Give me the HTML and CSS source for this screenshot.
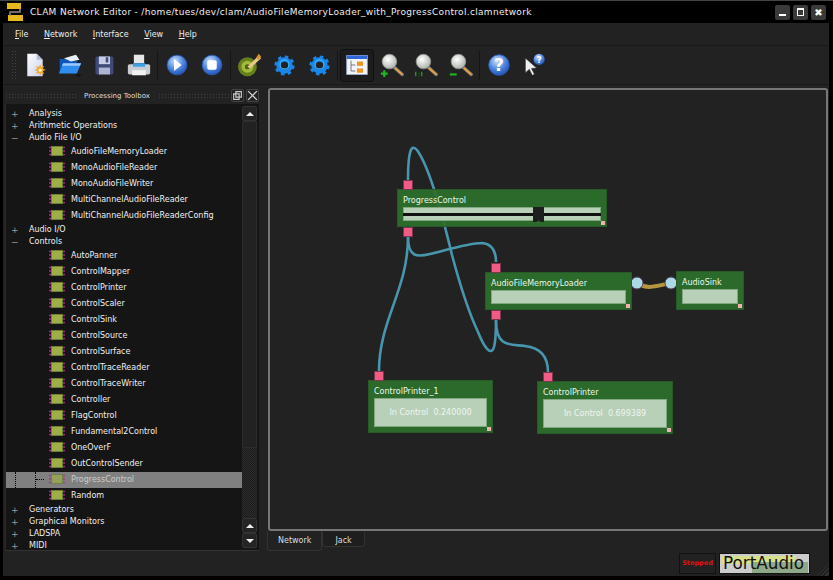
FILE: index.html
```html
<!DOCTYPE html>
<html lang="en">
<head>
    <meta charset="UTF-8">
    <title>CLAM Network Editor</title>
    <link rel="stylesheet" href="styles.css">
</head>
<body>
    <svg class="defs" width="0" height="0">
        <defs>
            <radialGradient id="blueBall" cx="40%" cy="30%" r="75%">
                <stop offset="0" stop-color="#cfe0fb"/>
                <stop offset="0.55" stop-color="#4f86de"/>
                <stop offset="1" stop-color="#1c4fb0"/>
            </radialGradient>
            <radialGradient id="lens" cx="40%" cy="35%" r="70%">
                <stop offset="0" stop-color="#ffffff"/>
                <stop offset="1" stop-color="#a9aea6"/>
            </radialGradient>
            <linearGradient id="paper" x1="0" y1="0" x2="1" y2="1">
                <stop offset="0" stop-color="#ffffff"/>
                <stop offset="1" stop-color="#c9cfe8"/>
            </linearGradient>
            <symbol id="chip" viewBox="0 0 16 10">
                <path d="M0 1.500h3M0 5h3M0 8.500h3M13 1.500h3M13 5h3M13 8.500h3" stroke="#b0209a" stroke-width="1.500"/>
                <rect x="2.500" y="0.500" width="11" height="9" fill="#9db048" stroke="#6d7f30"/>
            </symbol>
            <symbol id="gear" viewBox="0 0 28 28">
                <circle cx="14" cy="14" r="8" fill="none" stroke="#1a86e8" stroke-width="6"/>
                <circle cx="14" cy="14" r="11.500" fill="none" stroke="#1a86e8" stroke-width="4" stroke-dasharray="4.500 4.530"/>
                <circle cx="14" cy="12.500" r="6" fill="none" stroke="#3fb6fa" stroke-width="1.500"/>
            </symbol>
            <symbol id="magnifier" viewBox="0 0 28 28">
                <path d="M16 16l10 9" stroke="#777" stroke-width="4" stroke-linecap="round"/>
                <path d="M18 18l7.500 6.700" stroke="#e8a13c" stroke-width="2.200" stroke-linecap="round"/>
                <circle cx="11" cy="10" r="8.500" fill="url(#lens)" stroke="#8e938c"/>
            </symbol>
        </defs>
    </svg>

    <div class="window">
        <header class="titlebar">
            <svg class="app-logo" viewBox="0 0 20 20">
                <rect x="2" y="1" width="14" height="6" fill="#e6b81e"/>
                <rect x="3" y="13" width="15" height="6" fill="#e6b81e"/>
                <path d="M15 7v3H5v4" fill="none" stroke="#8a8a8a" stroke-width="1.500"/>
            </svg>
            <span class="window-title">CLAM Network Editor - /home/tues/dev/clam/AudioFileMemoryLoader_with_ProgressControl.clamnetwork</span>
            <div class="window-buttons">
                <span class="wm-btn"><i class="wm-min"></i></span>
                <span class="wm-btn"><i class="wm-max"></i></span>
                <span class="wm-btn wm-close">✖</span>
            </div>
        </header>

        <div class="client">
            <nav class="menubar">
                <span class="menu"><u>F</u>ile</span>
                <span class="menu"><u>N</u>etwork</span>
                <span class="menu"><u>I</u>nterface</span>
                <span class="menu"><u>V</u>iew</span>
                <span class="menu"><u>H</u>elp</span>
            </nav>

            <div class="toolbar">
                <span class="grip"></span>
                <span class="tool"><svg viewBox="0 0 28 28"><path d="M5 1h11l7 7v19H5z" fill="url(#paper)"/><path d="M16 1v7h7z" fill="#b5bbd6"/><path d="M20 13l1.200 3.500 3.500-1.500-1.500 3.500 3.500 1.200-3.500 1.300 1.500 3.500-3.500-1.500-1.200 3.500-1.300-3.500-3.500 1.500 1.500-3.500-3.500-1.300 3.500-1.200-1.500-3.500 3.500 1.500z" fill="#f5a623"/><circle cx="20" cy="20" r="2" fill="#fff3b0"/></svg></span>
                <span class="tool"><svg viewBox="0 0 28 28"><path d="M2 7h8l2 2h10v14H2z" fill="#0e56b8"/><path d="M7 6l14-4 4 6-10 2z" fill="#e8eefb"/><path d="M6 12h21l-5 12H1z" fill="#2f8df0"/><path d="M6 12h21l-1.500 3H4.500z" fill="#9cc9fb"/><path d="M20 25h8l-4 3z" fill="#111"/></svg></span>
                <span class="tool"><svg viewBox="0 0 28 28"><rect x="4" y="4" width="21" height="21" rx="2" fill="#3f4a78"/><rect x="8" y="4" width="13" height="9" fill="#c7cde6"/><rect x="8" y="17" width="13" height="8" fill="#aeb5d0"/><rect x="16" y="5" width="3" height="6" fill="#3f4a78"/></svg></span>
                <span class="tool"><svg viewBox="0 0 28 28"><rect x="8" y="2" width="12" height="10" fill="#e6e6e6"/><path d="M3 13h22a2 2 0 0 1 2 2v8a2 2 0 0 1-2 2H3a2 2 0 0 1-2-2v-8a2 2 0 0 1 2-2z" fill="#c9ccd0"/><rect x="7" y="12" width="14" height="4" fill="#3aa0e8"/><rect x="6" y="20" width="16" height="6" fill="#f2f2f2"/></svg></span>
                <span class="tool-sep"></span>
                <span class="tool"><svg viewBox="0 0 28 28"><circle cx="14" cy="14" r="11.500" fill="url(#blueBall)" stroke="#2a5ec0"/><path d="M10.500 7l9 7-9 7z" fill="#fff"/></svg></span>
                <span class="tool"><svg viewBox="0 0 28 28"><circle cx="14" cy="14" r="11.500" fill="url(#blueBall)" stroke="#2a5ec0"/><rect x="8.500" y="8.500" width="11" height="11" rx="2" fill="#fff"/></svg></span>
                <span class="tool-sep"></span>
                <span class="tool"><svg viewBox="0 0 28 28"><circle cx="11" cy="16" r="11" fill="#66801e"/><circle cx="11" cy="16" r="7" fill="#a3ba3c"/><circle cx="11" cy="16" r="3" fill="#4c6214"/><path d="M11 16L24 3l3 3-13 12z" fill="#e8c98c"/><path d="M21 6l3-5 3 3-3 4z" fill="#d9942a"/></svg></span>
                <span class="tool"><svg class="gear-icon" viewBox="0 0 28 28"><use href="#gear"/></svg></span>
                <span class="tool"><svg class="gear-icon" viewBox="0 0 28 28"><use href="#gear"/></svg></span>
                <span class="tool-sep"></span>
                <span class="tool is-on"><svg viewBox="0 0 28 28"><rect x="2" y="3" width="24" height="22" fill="#f2f4fa" stroke="#9fb2d8"/><rect x="2" y="3" width="24" height="4" fill="#2f67d8"/><path d="M7 9v12M7 14h5M7 21h5" stroke="#666" fill="none"/><rect x="14" y="10" width="7" height="5" fill="#f0921e"/><rect x="14" y="18" width="7" height="5" fill="#f0921e"/></svg></span>
                <span class="tool"><svg viewBox="0 0 28 28"><use href="#magnifier"/><path d="M1 24h8M5 20v8" stroke="#22b522" stroke-width="2.500"/></svg></span>
                <span class="tool"><svg viewBox="0 0 28 28"><use href="#magnifier"/><path d="M2 22v5M6 24v.500M6 26.500v.500M9 22v5" stroke="#1d9c1d" stroke-width="1.600"/></svg></span>
                <span class="tool"><svg viewBox="0 0 28 28"><use href="#magnifier"/><path d="M1 25h8" stroke="#22b522" stroke-width="2.500"/></svg></span>
                <span class="tool-sep"></span>
                <span class="tool"><svg viewBox="0 0 28 28"><circle cx="14" cy="14" r="12" fill="url(#blueBall)" stroke="#2a5ec0"/><text x="14" y="21" class="help-mark">?</text></svg></span>
                <span class="tool"><svg viewBox="0 0 28 28"><path d="M4 6v17l4.500-4 3.500 7 2.500-1.200-3.500-6.800 6-.500z" fill="#eee" stroke="#333" stroke-width="0.600"/><circle cx="20" cy="7.500" r="6.500" fill="url(#blueBall)"/><text x="20" y="11.500" class="help-mark small">?</text></svg></span>
            </div>

            <div class="main">
                <aside class="dock">
                    <div class="dock-title">
                        <span class="dock-dots"></span>
                        <span class="dock-label">Processing Toolbox</span>
                        <span class="dock-dots"></span>
                        <span class="dock-btn"><svg viewBox="0 0 10 10"><path d="M3.500 1.500h5v5h-5zM1.500 3.500h5v5h-5z" fill="none" stroke="#ccc"/></svg></span>
                        <span class="dock-btn"><svg viewBox="0 0 10 10"><path d="M1 1l8 8M9 1l-8 8" stroke="#ccc" stroke-width="1.200"/></svg></span>
                    </div>
                    <div class="tree-box">
                        <div class="tree">
                            <div class="group"><b>+</b>Analysis</div>
                            <div class="group"><b>+</b>Arithmetic Operations</div>
                            <div class="group"><b>−</b>Audio File I/O</div>
                            <div class="leaf"><svg class="chip"><use href="#chip"/></svg>AudioFileMemoryLoader</div>
                            <div class="leaf"><svg class="chip"><use href="#chip"/></svg>MonoAudioFileReader</div>
                            <div class="leaf"><svg class="chip"><use href="#chip"/></svg>MonoAudioFileWriter</div>
                            <div class="leaf"><svg class="chip"><use href="#chip"/></svg>MultiChannelAudioFileReader</div>
                            <div class="leaf"><svg class="chip"><use href="#chip"/></svg>MultiChannelAudioFileReaderConfig</div>
                            <div class="group"><b>+</b>Audio I/O</div>
                            <div class="group"><b>−</b>Controls</div>
                            <div class="leaf"><svg class="chip"><use href="#chip"/></svg>AutoPanner</div>
                            <div class="leaf"><svg class="chip"><use href="#chip"/></svg>ControlMapper</div>
                            <div class="leaf"><svg class="chip"><use href="#chip"/></svg>ControlPrinter</div>
                            <div class="leaf"><svg class="chip"><use href="#chip"/></svg>ControlScaler</div>
                            <div class="leaf"><svg class="chip"><use href="#chip"/></svg>ControlSink</div>
                            <div class="leaf"><svg class="chip"><use href="#chip"/></svg>ControlSource</div>
                            <div class="leaf"><svg class="chip"><use href="#chip"/></svg>ControlSurface</div>
                            <div class="leaf"><svg class="chip"><use href="#chip"/></svg>ControlTraceReader</div>
                            <div class="leaf"><svg class="chip"><use href="#chip"/></svg>ControlTraceWriter</div>
                            <div class="leaf"><svg class="chip"><use href="#chip"/></svg>Controller</div>
                            <div class="leaf"><svg class="chip"><use href="#chip"/></svg>FlagControl</div>
                            <div class="leaf"><svg class="chip"><use href="#chip"/></svg>Fundamental2Control</div>
                            <div class="leaf"><svg class="chip"><use href="#chip"/></svg>OneOverF</div>
                            <div class="leaf"><svg class="chip"><use href="#chip"/></svg>OutControlSender</div>
                            <div class="leaf selected"><i class="guide-a"></i><i class="guide-b"></i><svg class="chip"><use href="#chip"/></svg>ProgressControl</div>
                            <div class="leaf"><svg class="chip"><use href="#chip"/></svg>Random</div>
                            <div class="group"><b>+</b>Generators</div>
                            <div class="group"><b>+</b>Graphical Monitors</div>
                            <div class="group"><b>+</b>LADSPA</div>
                            <div class="group"><b>+</b>MIDI</div>
                        </div>
                        <div class="scrollbar">
                            <span class="sb-btn sb-up"></span>
                            <span class="sb-handle"></span>
                            <span class="sb-trough"></span>
                            <span class="sb-btn sb-up"></span>
                            <span class="sb-btn sb-down"></span>
                        </div>
                    </div>
                </aside>

                <section class="work">
                    <div class="canvas">
                        <svg class="wires" viewBox="0 0 559 443">
                            <g transform="translate(-270 -90)">
                                <path class="wire" d="M408 180C408 152 411 143 417 150C428 165 440 205 452 255C460 285 470 315 478 332C484 347 491 357 494 347C496 340 496 330 496 320"/>
                                <path class="wire" d="M408 237C408 258 418 257 430 254C450 249 470 243 482 243C492 244 496 252 496 262"/>
                                <path class="wire" d="M408 237C408 290 379 320 379 371"/>
                                <path class="wire" d="M496 320C496 348 510 344 525 346C542 348 548 358 548 372"/>
                                <path class="wire-audio" d="M637 283C648 290 656 286 671 283"/>
                                <circle class="audio-port" cx="637" cy="283" r="6"/>
                                <circle class="audio-port" cx="671" cy="283" r="6"/>
                            </g>
                        </svg>

                        <div class="node node-progress">
                            <span class="port port-top"></span>
                            <span class="node-name">ProgressControl</span>
                            <div class="node-body slider"><span class="slider-groove"></span><span class="slider-thumb"></span></div>
                            <span class="port port-bottom"></span>
                            <span class="resize"></span>
                        </div>
                        <div class="node node-loader">
                            <span class="port port-top"></span>
                            <span class="node-name">AudioFileMemoryLoader</span>
                            <div class="node-body"></div>
                            <span class="port port-bottom"></span>
                            <span class="resize"></span>
                        </div>
                        <div class="node node-sink">
                            <span class="node-name">AudioSink</span>
                            <div class="node-body"></div>
                            <span class="resize"></span>
                        </div>
                        <div class="node node-printer1">
                            <span class="port port-top"></span>
                            <span class="node-name">ControlPrinter_1</span>
                            <div class="node-body printer">In Control&nbsp; 0.240000</div>
                            <span class="resize"></span>
                        </div>
                        <div class="node node-printer2">
                            <span class="port port-top"></span>
                            <span class="node-name">ControlPrinter</span>
                            <div class="node-body printer">In Control&nbsp; 0.699389</div>
                            <span class="resize"></span>
                        </div>
                    </div>
                    <div class="tabs">
                        <span class="tab active">Network</span>
                        <span class="tab">Jack</span>
                    </div>
                </section>
            </div>

            <footer class="statusbar">
                <span class="stopped">Stopped</span>
                <span class="backend">
                    <i class="level-top"></i><i class="level-bottom"></i>
                    <span class="backend-name">PortAudio</span>
                </span>
                <span class="size-grip"></span>
            </footer>
        </div>
    </div>
</body>
</html>
```

FILE: styles.css
```css
html, body {
    margin: 0;
    padding: 0;
    background: #000;
}

body {
    font-family: "DejaVu Sans", sans-serif;
    font-size: 8px;
    color: #f0f0f0;
}

.defs {
    display: block;
}

.window {
    width: 833px;
    height: 580px;
    box-sizing: border-box;
    background: #000;
    border-top: 1px solid #444;
    display: flex;
    flex-direction: column;
    overflow: hidden;
}

/* Title bar */
.titlebar {
    height: 22px;
    display: flex;
    align-items: center;
    padding: 0 7px 0 5px;
    flex: none;
}

.app-logo {
    width: 20px;
    height: 20px;
    margin-right: 5px;
}

.window-title {
    font-size: 9px;
    letter-spacing: 0.32px;
    color: #eee;
    flex: 1;
    white-space: nowrap;
}

.window-buttons {
    display: flex;
    gap: 3px;
}

.wm-btn {
    width: 15px;
    height: 15px;
    border-radius: 2px;
    background: #3a3a3a;
    color: #fff;
    display: flex;
    align-items: center;
    justify-content: center;
    font-size: 10px;
}

.wm-min {
    width: 7px;
    height: 2px;
    background: #fff;
    margin-top: 6px;
}

.wm-max {
    width: 5px;
    height: 5px;
    border: 1px solid #fff;
    border-top-width: 2px;
}

/* Main client area */
.client {
    flex: 1;
    margin: 0 4px 4px 3px;
    background: #222;
    display: flex;
    flex-direction: column;
    min-height: 0;
}

.menubar {
    height: 23px;
    flex: none;
    display: flex;
    align-items: center;
    padding-left: 12px;
    gap: 15.500px;
    border-bottom: 1px solid #191919;
    box-sizing: border-box;
}

.menu {
    color: #eee;
}

.toolbar {
    height: 39px;
    flex: none;
    display: flex;
    align-items: center;
    padding-left: 8px;
    border-bottom: 1px solid #191919;
    box-sizing: border-box;
}

.grip {
    width: 6px;
    height: 30px;
    margin-right: 1px;
    background-image: radial-gradient(#444 1px, transparent 1px);
    background-size: 3px 3px;
}

.tool {
    width: 34.600px;
    height: 33px;
    display: flex;
    align-items: center;
    justify-content: center;
    flex: none;
    box-sizing: border-box;
}

.tool svg {
    width: 24px;
    height: 24px;
}

.tool .gear-icon {
    width: 21px;
    height: 21px;
}

.tool.is-on {
    background: #1c1c1c;
    border: 1px solid #111;
    border-radius: 3px;
}

.tool-sep {
    width: 1px;
    height: 30px;
    margin: 0 1.500px 0 1px;
    background: #161616;
    flex: none;
}

.help-mark {
    font-family: "DejaVu Sans", sans-serif;
    font-size: 20px;
    font-weight: bold;
    fill: #fff;
    text-anchor: middle;
}

.help-mark.small {
    font-size: 10px;
}

.main {
    flex: 1;
    display: flex;
    min-height: 0;
}

/* Processing toolbox */
.dock {
    width: 254px;
    margin-left: 2px;
    margin-right: 9px;
    flex: none;
    display: flex;
    flex-direction: column;
    padding-top: 3px;
}

.dock-title {
    height: 15px;
    flex: none;
    display: flex;
    align-items: center;
    gap: 2px;
    font-size: 7px;
    color: #ddd;
}

.dock-dots {
    flex: 1;
    height: 5px;
    background-image: radial-gradient(#444 1px, transparent 1px);
    background-size: 3px 3px;
}

.dock-label {
    padding: 0 6px;
    white-space: nowrap;
}

.dock-btn {
    width: 13px;
    height: 13px;
    box-sizing: border-box;
    border: 1px solid #444;
    border-radius: 2px;
    display: flex;
    flex: none;
}

.tree-box {
    flex: 1;
    min-height: 0;
    margin-top: 1px;
    display: flex;
    background: #151515;
    border-bottom: 1px solid #333;
    border-left: 1px solid #2a2a2a;
}

.tree {
    flex: 1;
    padding-top: 3px;
    overflow: hidden;
    min-width: 0;
}

.group {
    height: 12px;
    line-height: 14px;
    display: flex;
    white-space: nowrap;
    padding-left: 5px;
}

.group b {
    width: 18px;
    font-weight: normal;
    font-size: 9px;
    color: #999;
    flex: none;
}

.leaf {
    height: 16px;
    display: flex;
    align-items: center;
    padding-left: 43px;
    white-space: nowrap;
    position: relative;
}

.chip {
    width: 16px;
    height: 10px;
    margin-right: 6px;
    flex: none;
}

.leaf.selected {
    background: linear-gradient(transparent 1px, #808080 1px);
    box-shadow: 0 1px 0 #808080;
    color: #ccc;
}

.leaf.selected .chip {
    opacity: 0.7;
}

.guide-a, .guide-b {
    position: absolute;
    top: 1px;
    height: 16px;
    border-left: 1px dotted #000;
}

.guide-a {
    left: 9px;
}

.guide-b {
    left: 29px;
    width: 8px;
}

.guide-b::after {
    content: "";
    display: block;
    margin-top: 7px;
    border-top: 1px dotted #000;
}

.scrollbar {
    width: 15px;
    margin-right: 2px;
    flex: none;
    display: flex;
    flex-direction: column;
    padding-top: 2px;
    padding-bottom: 2px;
    box-sizing: border-box;
}

.sb-btn {
    height: 15px;
    flex: none;
    background: #242424;
    border: 1px solid #333;
    border-radius: 2px;
    box-sizing: border-box;
    display: flex;
    align-items: center;
    justify-content: center;
}

.sb-up::before, .sb-down::before {
    content: "";
    border-left: 4px solid transparent;
    border-right: 4px solid transparent;
}

.sb-up::before {
    border-bottom: 4px solid #eee;
}

.sb-down::before {
    border-top: 4px solid #eee;
}

.sb-handle {
    height: 327px;
    flex: none;
    background: #222;
    border: 1px solid #2c2c2c;
    box-sizing: border-box;
}

.sb-trough {
    flex: 1;
    background: repeating-conic-gradient(#2e2e2e 0 25%, #1a1a1a 0 50%) 0 0 / 2px 2px;
}

/* Network canvas */
.work {
    flex: 1;
    min-width: 0;
    display: flex;
    flex-direction: column;
    padding-top: 3px;
    margin-right: 1px;
}

.canvas {
    height: 443px;
    flex: none;
    box-sizing: border-box;
    border: 2px solid #777;
    border-radius: 3px;
    position: relative;
    background: #222;
    overflow: hidden;
}

.wires {
    position: absolute;
    left: 0;
    top: 0;
    width: 559px;
    height: 443px;
}

.wire {
    fill: none;
    stroke: #4896ae;
    stroke-width: 2.600;
}

.wire-audio {
    fill: none;
    stroke: #b5963f;
    stroke-width: 4;
}

.audio-port {
    fill: #add8e6;
    stroke: #54405a;
}

.node {
    position: absolute;
    box-sizing: border-box;
    background: rgba(45, 112, 45, 0.93);
    border: 1px solid #265a26;
    padding: 3px 5px 5px;
    display: flex;
    flex-direction: column;
}

.node-name {
    height: 14px;
    line-height: 15px;
    color: #eaf8ea;
    white-space: nowrap;
    flex: none;
}

.node-body {
    flex: 1;
    background: #b8d0b8;
    border: 1px solid #82a882;
    box-sizing: border-box;
    color: #f0f5f0;
}

.node-progress { left: 127px; top: 99px; width: 210px; height: 38px; }
.node-loader { left: 215px; top: 182px; width: 147px; height: 38px; }
.node-sink { left: 406px; top: 181px; width: 68px; height: 39px; }
.node-printer1 { left: 98px; top: 290px; width: 125px; height: 53px; }
.node-printer2 { left: 267px; top: 291px; width: 136px; height: 53px; }

.port {
    position: absolute;
    left: 5px;
    width: 10px;
    height: 10px;
    box-sizing: border-box;
    background: #f25c84;
    border: 1px solid #7a3850;
}

.port-top { top: -10px; }
.port-bottom { bottom: -11px; }

.resize {
    position: absolute;
    right: 1px;
    bottom: 1px;
    width: 4px;
    height: 4px;
    background: #eeb0b0;
}

.slider {
    position: relative;
}

.slider-groove {
    position: absolute;
    left: -1px;
    right: -1px;
    top: 5px;
    height: 3px;
    background: #111;
}

.slider-thumb {
    position: absolute;
    left: 129px;
    top: -1px;
    width: 11px;
    height: 15px;
    background: #1e1e1e;
    clip-path: polygon(0 0, 100% 0, 100% 100%, 70% 100%, 50% 92%, 30% 100%, 0 100%);
}

.printer {
    display: flex;
    align-items: center;
    justify-content: center;
    white-space: pre;
}

/* Tabs */
.tabs {
    flex: 1;
    display: flex;
    align-items: flex-start;
    margin-left: -1px;
}

.tab {
    height: 14px;
    line-height: 17px;
    padding: 0 12px;
    margin-top: 1px;
    background: #1e1e1e;
    border: 1px solid #333;
    border-top: none;
    border-radius: 0 0 3px 3px;
    color: #ddd;
}

.tab.active {
    height: 19px;
    margin-top: 0;
    padding: 0 10px;
    line-height: 19px;
    background: #222;
}

/* Status bar */
.statusbar {
    height: 25px;
    flex: none;
    display: flex;
    align-items: center;
    justify-content: flex-end;
    gap: 3px;
    padding-right: 19px;
    position: relative;
}

.stopped {
    width: 37px;
    height: 21px;
    box-sizing: border-box;
    border: 1px solid #111;
    font-size: 6.500px;
    font-weight: bold;
    color: #e01010;
    line-height: 19px;
    text-align: center;
    white-space: nowrap;
}

.backend {
    width: 91px;
    height: 21px;
    box-sizing: border-box;
    background: #ccc;
    border: 1px solid #111;
    position: relative;
    overflow: hidden;
}

.level-top, .level-bottom {
    position: absolute;
}

.level-top {
    left: 2px;
    top: 2px;
    width: 74px;
    height: 8px;
    background: #d8e08a;
}

.level-bottom {
    left: 32px;
    top: 8px;
    width: 56px;
    height: 11px;
    background: #8fa88a;
}

.backend-name {
    position: absolute;
    left: 3px;
    top: 0;
    font-size: 16.800px;
    line-height: 19px;
    color: #111;
}

.size-grip {
    position: absolute;
    right: 0;
    bottom: 0;
    width: 12px;
    height: 12px;
    background: repeating-linear-gradient(135deg, transparent 0 2px, #3a3a3a 2px 3px);
    clip-path: polygon(100% 0, 100% 100%, 0 100%);
}
```
